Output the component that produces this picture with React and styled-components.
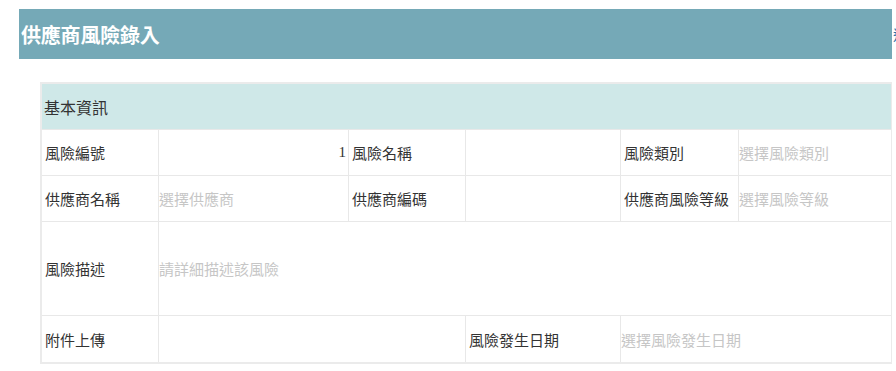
import React from "react";
import styled, { createGlobalStyle } from "styled-components";

const GlobalStyle = createGlobalStyle`
  body {
    margin: 0;
    background: #fff;
    overflow: hidden;
    font-family: "Noto Sans CJK TC", "Noto Sans", sans-serif;
  }
`;

const Page = styled.div`
  width: 896px;
  padding-top: 9px;
`;

const TopRow = styled.div`
  display: flex;
  align-items: center;
  white-space: nowrap;
`;

const TitleBar = styled.div`
  margin-left: 19px;
  width: 873px;
  height: 50px;
  flex-shrink: 0;
  background-color: #75a9b7;
  display: flex;
  align-items: center;
  padding-left: 2px;
  box-sizing: border-box;
`;

const Title = styled.h1`
  margin: 0;
  font-size: 20px;
  font-weight: bold;
  color: #fff;
  letter-spacing: -0.2px;
`;

const BackLink = styled.a`
  margin-left: 1px;
  font-size: 14px;
  color: #2f6fa7;
  text-decoration: none;
`;

const FormTable = styled.div`
  margin: 23px 0 0 40px;
  width: 852px;
  box-sizing: border-box;
  border: 2px solid #ebebeb;
  border-right-width: 1px;
  display: grid;
  grid-template-columns: 117px 190px 117px 155px 118px 1fr;
`;

const SectionHead = styled.div`
  grid-column: 1 / -1;
  height: 46px;
  box-sizing: border-box;
  border-bottom: 1px solid #e8e8e8;
  background-color: #cfe8e8;
  display: flex;
  align-items: center;
  padding-left: 2px;
  font-size: 16px;
  color: #333;
`;

const Cell = styled.div`
  grid-column: span ${(p) => p.span || 1};
  height: ${(p) => (p.tall ? 94 : 46)}px;
  box-sizing: border-box;
  border-bottom: ${(p) => (p.last ? 0 : 1)}px solid #e8e8e8;
  border-right: ${(p) => (p.end ? 0 : 1)}px solid #e8e8e8;
  display: flex;
  align-items: center;
  justify-content: ${(p) => (p.right ? "flex-end" : "flex-start")};
  font-size: 15px;
  white-space: nowrap;
  overflow: hidden;
`;

const Label = styled(Cell)`
  padding-left: 3px;
  color: #333;
`;

const Placeholder = styled.span`
  color: #c6c6c6;
`;

const NumberValue = styled.span`
  padding-right: 2px;
  font-family: "Liberation Serif", serif;
  font-size: 15px;
  color: #333;
`;

export default function App() {
  return (
    <Page>
      <GlobalStyle />
      <TopRow>
        <TitleBar>
          <Title>供應商風險錄入</Title>
        </TitleBar>
        <BackLink href="#">返回</BackLink>
      </TopRow>
      <FormTable>
        <SectionHead>基本資訊</SectionHead>

        <Label>風險編號</Label>
        <Cell right>
          <NumberValue>1</NumberValue>
        </Cell>
        <Label>風險名稱</Label>
        <Cell />
        <Label>風險類別</Label>
        <Cell end>
          <Placeholder>選擇風險類別</Placeholder>
        </Cell>

        <Label>供應商名稱</Label>
        <Cell>
          <Placeholder>選擇供應商</Placeholder>
        </Cell>
        <Label>供應商編碼</Label>
        <Cell />
        <Label>供應商風險等級</Label>
        <Cell end>
          <Placeholder>選擇風險等級</Placeholder>
        </Cell>

        <Label tall>風險描述</Label>
        <Cell tall span={5} end>
          <Placeholder>請詳細描述該風險</Placeholder>
        </Cell>

        <Label last>附件上傳</Label>
        <Cell last span={2} />
        <Label last>風險發生日期</Label>
        <Cell last span={2} end>
          <Placeholder>選擇風險發生日期</Placeholder>
        </Cell>
      </FormTable>
    </Page>
  );
}
